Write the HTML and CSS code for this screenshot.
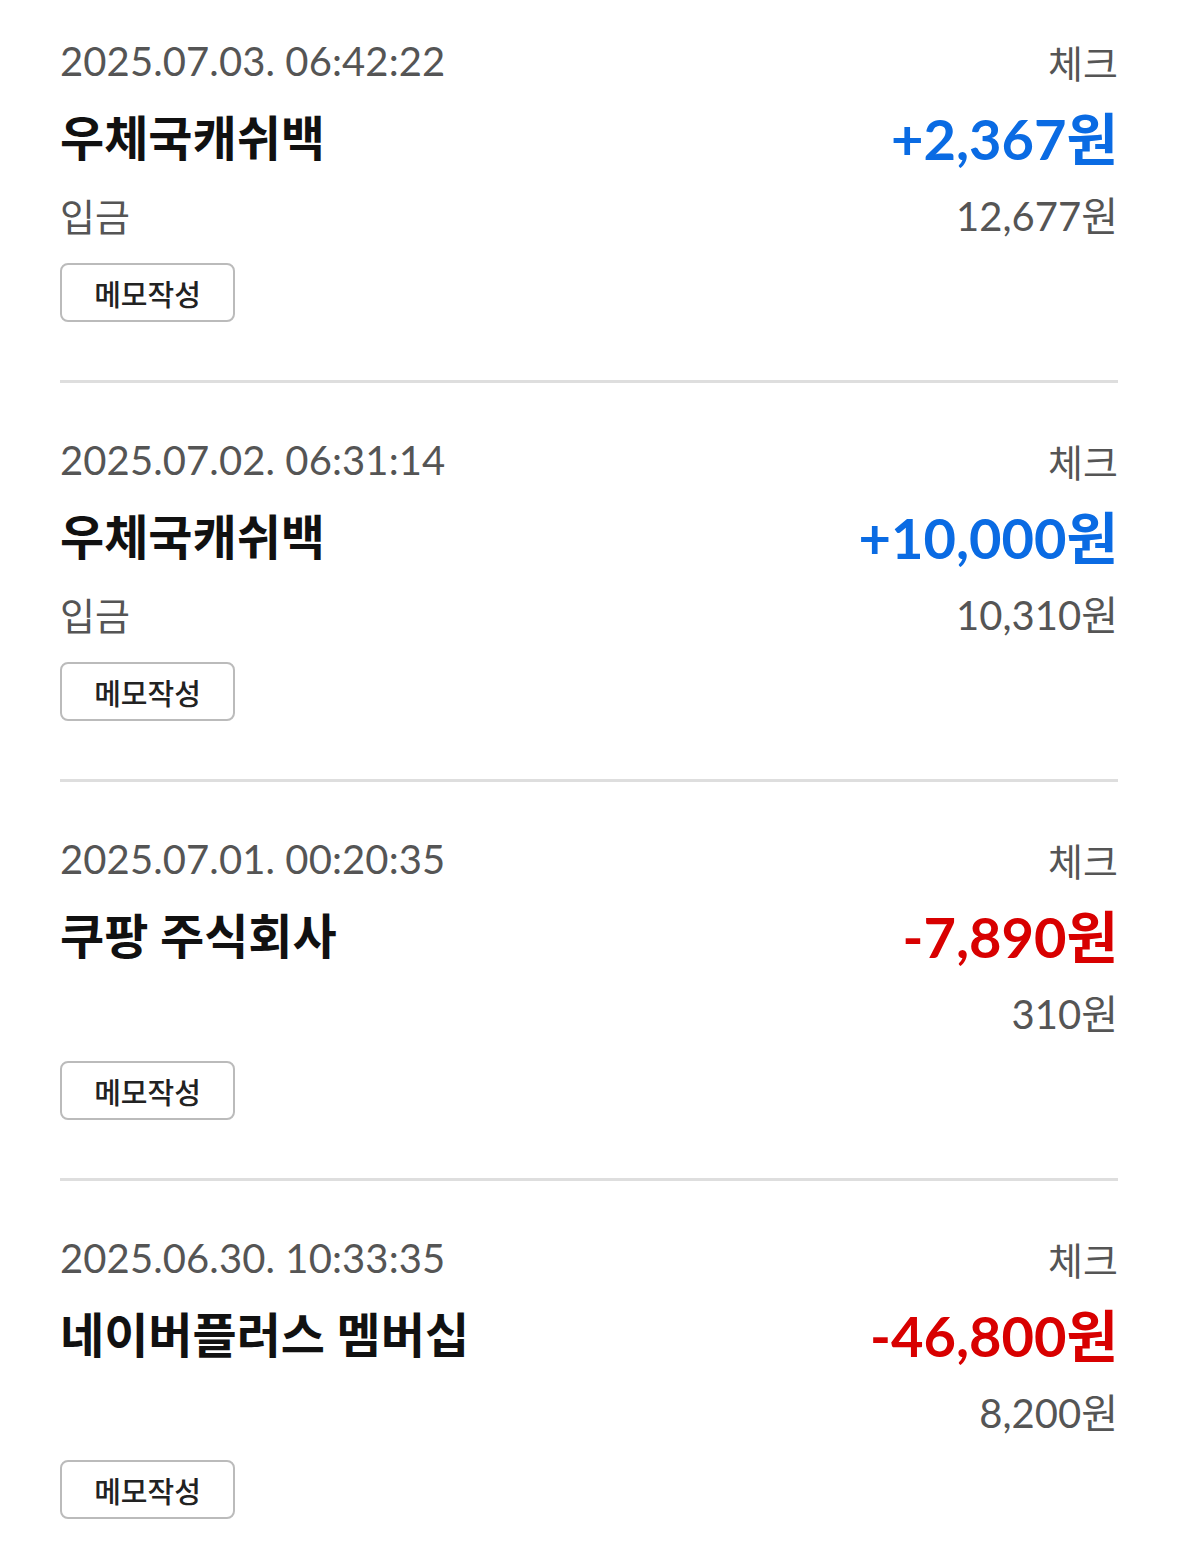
FILE: index.html
```html
<!DOCTYPE html>
<html lang="ko">
<head>
  <meta charset="UTF-8">
  <title>거래내역</title>
  <meta name="viewport" content="width=device-width, initial-scale=1.0">
  <link rel="stylesheet" href="styles.css">
</head>
<body>

<ul class="tx-list">
  <li class="tx">
    <div class="row row-top">
      <span class="date">2025.07.03. 06:42:22</span>
      <span class="kind">체크</span>
    </div>
    <div class="row row-main">
      <span class="name">우체국캐쉬백</span>
      <span class="amount plus">+2,367원</span>
    </div>
    <div class="row row-sub">
      <span class="type">입금</span>
      <span class="balance">12,677원</span>
    </div>
    <button class="memo">메모작성</button>
  </li>

  <li class="tx">
    <div class="row row-top">
      <span class="date">2025.07.02. 06:31:14</span>
      <span class="kind">체크</span>
    </div>
    <div class="row row-main">
      <span class="name">우체국캐쉬백</span>
      <span class="amount plus">+10,000원</span>
    </div>
    <div class="row row-sub">
      <span class="type">입금</span>
      <span class="balance">10,310원</span>
    </div>
    <button class="memo">메모작성</button>
  </li>

  <li class="tx">
    <div class="row row-top">
      <span class="date">2025.07.01. 00:20:35</span>
      <span class="kind">체크</span>
    </div>
    <div class="row row-main">
      <span class="name">쿠팡 주식회사</span>
      <span class="amount minus">-7,890원</span>
    </div>
    <div class="row row-sub">
      <span class="type"></span>
      <span class="balance">310원</span>
    </div>
    <button class="memo">메모작성</button>
  </li>

  <li class="tx">
    <div class="row row-top">
      <span class="date">2025.06.30. 10:33:35</span>
      <span class="kind">체크</span>
    </div>
    <div class="row row-main">
      <span class="name">네이버플러스 멤버십</span>
      <span class="amount minus">-46,800원</span>
    </div>
    <div class="row row-sub">
      <span class="type"></span>
      <span class="balance">8,200원</span>
    </div>
    <button class="memo">메모작성</button>
  </li>
</ul>

</body>
</html>
```

FILE: styles.css
```css
body {
  font-family: Lato, "Noto Sans CJK KR", sans-serif;
  margin: 0;
  background-color: #fff;
  color: #111;
}
.tx-list {
  list-style: none;
  margin: 0;
  padding: 0 61px 0 60px;
}
.tx {
  padding: 52px 0 58px;
  border-bottom: 3px solid #dedede;
}
.tx:first-child {
  padding-top: 36px;
}
.row {
  display: flex;
  justify-content: space-between;
  align-items: center;
}
.row-top {
  height: 50px;
}
.row-main {
  height: 98px;
}
.row-sub {
  height: 60px;
}
.date, .kind, .type, .balance {
  font-size: 40px;
  color: #555;
}
.date {
  letter-spacing: 0.1px;
}
.kind, .type {
  font-size: 38px;
}
.name {
  font-size: 48px;
  font-weight: 700;
  color: #111;
}
.amount {
  font-size: 56px;
  font-weight: 700;
}
.plus {
  color: #0a6be3;
}
.minus {
  color: #d80000;
}
.memo {
  display: block;
  margin-top: 19px;
  width: 175px;
  height: 59px;
  border: 2px solid #bbb;
  border-radius: 8px;
  background: #fff;
  font-family: "Noto Sans CJK KR", sans-serif;
  font-size: 29px;
  font-weight: 500;
  color: #222;
  padding: 0;
}
```
